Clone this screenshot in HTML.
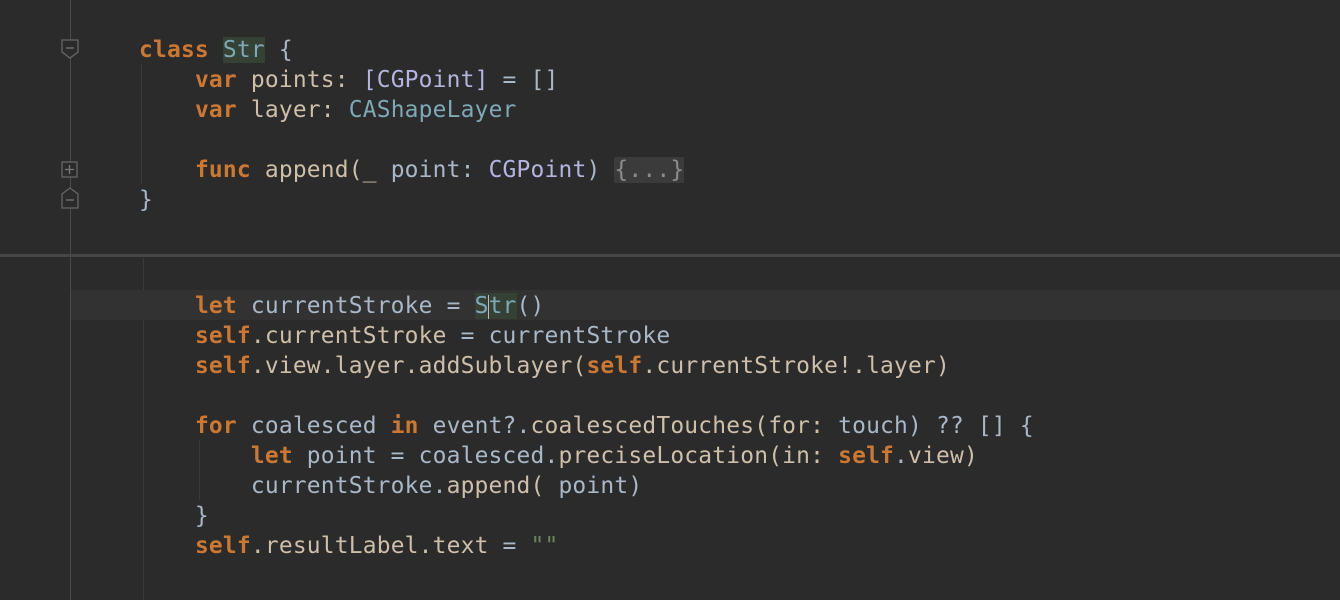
<!DOCTYPE html>
<html><head><style>
body{margin:0;width:1340px;height:600px;background:#2b2b2b;overflow:hidden;position:relative;font-family:"DejaVu Sans Mono","Liberation Mono",monospace;}
.l{position:absolute;left:139px;height:30px;line-height:30px;font-size:22.9px;white-space:pre;color:#a9b7c6;letter-spacing:0.2px;margin-top:1px}
.k{color:#cc7832;font-weight:bold}
.t{color:#b3b5e0}
.c{color:#7fa8b6}
.p{color:#cdbfa9}
.v{color:#a9b7c6}
.g{color:#6a8759}
.hl{background:#344134}
.fold{background:#3b3b3b;color:#8c8c8c}
.vl{position:absolute;width:1px;background:#555}
</style></head><body>
<div class="vl" style="left:70px;top:0;height:600px;background:#4a4a4a"></div>
<div class="vl" style="left:141px;top:64px;height:120px;background:#3a3a3a"></div>
<div style="position:absolute;left:0;top:254px;width:1340px;height:3px;background:#464646"></div>
<div class="vl" style="left:143px;top:258px;height:342px;background:#3a3a3a"></div>
<div class="vl" style="left:199px;top:440px;height:60px;background:#3a3a3a"></div>
<div style="position:absolute;left:71px;top:290px;width:1269px;height:30px;background:#323232"></div>
<svg style="position:absolute;left:60px;top:38px" width="22" height="24"><path d="M2 2H18V14L10 20L2 14Z" fill="#2b2b2b" stroke="#666" stroke-width="1.3"/><path d="M6 10H14" stroke="#777" stroke-width="1.3"/></svg>
<svg style="position:absolute;left:60px;top:160px" width="22" height="20"><rect x="2" y="2" width="15" height="15" fill="#2b2b2b" stroke="#666" stroke-width="1.3"/><path d="M5 9.5H14M9.5 5V14" stroke="#777" stroke-width="1.3"/></svg>
<svg style="position:absolute;left:60px;top:184px" width="22" height="26"><path d="M2 24V10L10 4L18 10V24Z" fill="#2b2b2b" stroke="#666" stroke-width="1.3"/><path d="M6 16H14" stroke="#777" stroke-width="1.3"/></svg>

<div class="l" style="top:34px"><span class="k">class</span> <span class="c hl">Str</span> {</div>
<div class="l" style="top:64px">    <span class="k">var</span> <span class="p">points:</span> <span class="t">[CGPoint]</span> = []</div>
<div class="l" style="top:94px">    <span class="k">var</span> <span class="p">layer:</span> <span class="c">CAShapeLayer</span></div>
<div class="l" style="top:154px">    <span class="k">func</span> <span class="p">append(_</span> <span class="v">point:</span> <span class="t">CGPoint</span>) <span class="fold">{...}</span></div>
<div class="l" style="top:184px">}</div>

<div class="l" style="top:290px">    <span class="k">let</span> currentStroke = <span class="c hl">S</span><span style="display:inline-block;width:2px;height:24px;background:#bbb;vertical-align:middle;margin:0 -1px"></span><span class="c hl">tr</span>()</div>
<div class="l" style="top:320px">    <span class="k">self</span><span class="p">.currentStroke</span> = currentStroke</div>
<div class="l" style="top:350px">    <span class="k">self</span><span class="p">.view.layer.addSublayer(</span><span class="k">self</span><span class="p">.currentStroke!.layer)</span></div>
<div class="l" style="top:410px">    <span class="k">for</span> coalesced <span class="k">in</span> event?.<span class="p">coalescedTouches(for:</span> touch) ?? [] {</div>
<div class="l" style="top:440px">        <span class="k">let</span> point = coalesced.<span class="p">preciseLocation(in:</span> <span class="k">self</span>.<span class="p">view)</span></div>
<div class="l" style="top:470px">        currentStroke.<span class="p">append(</span> point)</div>
<div class="l" style="top:500px">    }</div>
<div class="l" style="top:530px">    <span class="k">self</span><span class="p">.resultLabel.text</span> = <span class="g">""</span></div>
</body></html>
